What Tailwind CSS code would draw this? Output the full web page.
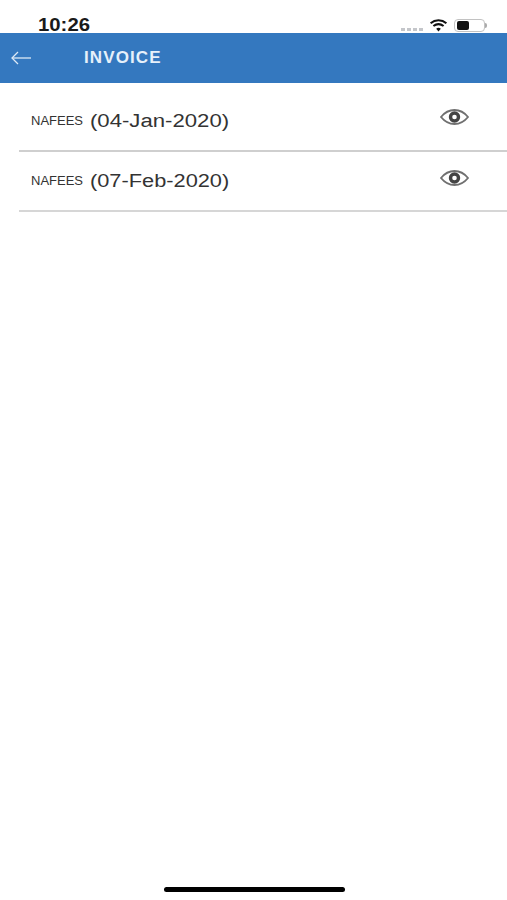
<!DOCTYPE html>
<html lang="en">
<head>
  <meta charset="UTF-8" />
  <meta name="viewport" content="width=device-width, initial-scale=1.0" />
  <title>Invoice</title>
  <script src="https://cdn.jsdelivr.net/npm/@tailwindcss/browser@4"></script>
</head>
<body class="bg-white font-['Liberation_Sans',sans-serif]">
  <div class="w-[507px] h-[900px] flex flex-col relative">

    <!-- status bar -->
    <div class="h-[33px] flex items-end justify-between pl-[38px] pr-[20px]">
      <span class="text-[18px] leading-[16px] font-bold origin-left scale-x-[1.13] text-[#1a1a1a]">10:26</span>
      <div class="flex items-end gap-[6px] mb-[1px]">
        <div class="flex gap-[2px] mb-[1px]">
          <div class="w-[4px] h-[3px] bg-[#c4c6ca]"></div>
          <div class="w-[4px] h-[3px] bg-[#c4c6ca]"></div>
          <div class="w-[4px] h-[3px] bg-[#c4c6ca]"></div>
          <div class="w-[4px] h-[3px] bg-[#c4c6ca]"></div>
        </div>
        <svg class="w-[19px] h-[13px]" viewBox="0 0 19 14">
          <path d="M1 4.6C6 0.4 13 0.4 18 4.6" fill="none" stroke="#111" stroke-width="2.2" />
          <path d="M4 7.6C7.4 5 11.6 5 15 7.6" fill="none" stroke="#111" stroke-width="2.2" />
          <path d="M7 10.4C8.6 9.2 10.4 9.2 12 10.4L9.5 13.4Z" fill="#111" />
        </svg>
        <div class="flex items-center">
          <div class="w-[31px] h-[13px] rounded-[4px] border border-[#c2c2c2] py-[1px] pl-[2px] flex">
            <div class="w-[12px] bg-[#111] rounded-[2px]"></div>
          </div>
          <div class="w-[2px] h-[5px] bg-[#aaa] rounded-r-[2px]"></div>
        </div>
      </div>
    </div>

    <!-- header -->
    <div class="h-[50px] bg-[#3478bf] flex items-center text-[#e6f0fa]">
      <svg class="ml-[11px] w-[20px] h-[14px]" viewBox="0 0 20 14" fill="none" stroke="#dce9f6" stroke-width="1.3">
        <path d="M20 7H1" />
        <path d="M7 1L1 7L7 13" />
      </svg>
      <span class="ml-[53px] text-[17px] font-bold tracking-[1.1px]">INVOICE</span>
    </div>

    <!-- list -->
    <div class="pl-[19px]">
      <div class="h-[69px] border-b-2 border-[#cfcfcf] flex items-center justify-between pl-[12px] pr-[38px]">
        <div class="flex items-center gap-[7px] text-[#333] mt-[9px]">
          <span class="text-[13px]">NAFEES</span>
          <span class="text-[18px] origin-left scale-x-[1.23]">(04-Jan-2020)</span>
        </div>
        <svg class="w-[29px] h-[16px]" viewBox="0 0 29 16" fill="none">
          <path d="M1 8C5 3 9.500 1 14.500 1C19.500 1 24 3 28 8C24 13 19.500 15 14.500 15C9.500 15 5 13 1 8Z" stroke="#707070" stroke-width="1.8" />
          <circle cx="14.500" cy="8" r="4" stroke="#444" stroke-width="3.4" />
        </svg>
      </div>
      <div class="h-[60px] border-b-2 border-[#d6d6d6] flex items-center justify-between pl-[12px] pr-[38px]">
        <div class="flex items-center gap-[7px] text-[#333]">
          <span class="text-[13px]">NAFEES</span>
          <span class="text-[18px] origin-left scale-x-[1.21]">(07-Feb-2020)</span>
        </div>
        <svg class="w-[29px] h-[16px] mb-[6px]" viewBox="0 0 29 16" fill="none">
          <path d="M1 8C5 3 9.500 1 14.500 1C19.500 1 24 3 28 8C24 13 19.500 15 14.500 15C9.500 15 5 13 1 8Z" stroke="#707070" stroke-width="1.8" />
          <circle cx="14.500" cy="8" r="4" stroke="#444" stroke-width="3.4" />
        </svg>
      </div>
    </div>

    <!-- home indicator -->
    <div class="absolute left-[164px] top-[887px] w-[181px] h-[5px] rounded-full bg-black"></div>
  </div>
</body>
</html>
